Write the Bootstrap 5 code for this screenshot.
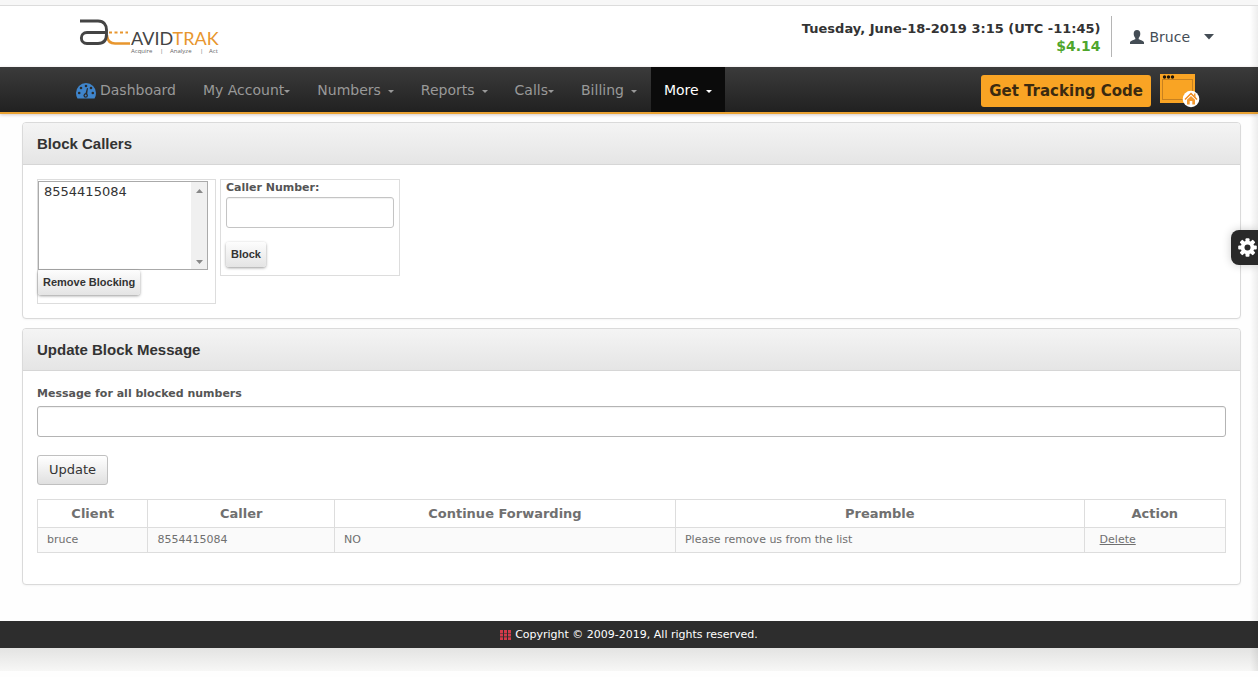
<!DOCTYPE html>
<html lang="en">
<head>
<meta charset="utf-8">
<meta name="viewport" content="width=device-width, initial-scale=1">
<title>AvidTrak - Block Callers</title>
<link href="https://cdn.jsdelivr.net/npm/bootstrap@5.3.0/dist/css/bootstrap.min.css" rel="stylesheet">
<style>
body{font-family:Verdana,"DejaVu Sans",sans-serif;font-size:13px;line-height:20px;color:#555;background:#fefefe;position:relative}
.edge-shade{position:absolute;top:6px;bottom:0;right:0;width:8px;background:linear-gradient(to right,rgba(0,0,0,0),rgba(0,0,0,.07));pointer-events:none}
.top-strip{height:6px;background:#f7f7f7;border-bottom:1px solid #dcdcdc}
.site-head{height:61px;padding:0 44px 0 76px;background:#fff}
.stamp{font-size:13px;line-height:17px;font-weight:700;color:#333;text-align:right;padding-right:11px;height:41px;border-right:1px solid #b5b5b5;padding-top:4px}
.stamp .balance{color:#4fa62c;font-size:14px;line-height:18px}
.head-right{padding-bottom:1px}
.user-link{color:#444d55;font-size:14px;padding:2px 0 0 18px}
.user-name{margin:0 14px 0 5px}
.main-nav{background:linear-gradient(#3b3b3b,#212121);border-bottom:2px solid #e9a233;padding:0 58px 0 63px;box-shadow:0 1px 3px rgba(80,40,40,.25)}
.main-nav .nav{gap:1px}
.main-nav .nav-link{padding:2px 13px 0;line-height:43px;font-size:14px;color:#999;white-space:nowrap}
.main-nav .nav-link.active{background:#0b0b0b;color:#fff}
.tick{display:inline-block;border:3px solid transparent;border-top-color:currentColor;border-bottom:0;vertical-align:middle}
.tick-gap{margin-left:7px}
.nav-side{padding-top:2px}
.btn-track{background:#f9a424;color:#3b2a10;font-size:15px;font-weight:700;line-height:20px;padding:6px 8px;border:0;border-radius:3px}
.btn-track:hover{background:#ffb445}
.page-body{padding:8px 17px 0 22px}
.panel-box{border:1px solid #dadada;border-radius:4px;background:#fff;box-shadow:0 1px 2px rgba(0,0,0,.04);margin-bottom:9px}
.panel-box>.card-header{background:linear-gradient(#f4f4f4,#e5e5e5);border-bottom:1px solid #d6d6d6;padding:0 14px;border-radius:3px 3px 0 0}
.panel-box h2{font-family:"Liberation Sans",Arial,sans-serif;font-size:15px;line-height:41px;font-weight:700;color:#333;margin:0}
.panel-box>.card-body{padding:14px}
.group-box{border:1px solid #ddd;width:179px;padding-bottom:9px}
.group-new{padding-left:5px;padding-right:5px;width:180px}
.blocked{border:1px solid #aaa;width:170px;height:89px;margin-top:1px}
.blocked select{border:0;outline:0;width:100%;padding:1px 1px 0;font-size:13px;line-height:20px;color:#333;background:#fff;overflow:hidden;font-family:inherit}
.blocked option{padding:1px 4px}
.rail{width:16px;flex:none;background:#f0f0f0;padding:7px 0 5px}
label{font-size:11px;line-height:15px;font-weight:700;color:#555}
.label-row{line-height:17px}
.form-control{height:31px;padding:4px 6px;font-size:13px;border:1px solid #c4c4c4;border-radius:3px;box-shadow:inset 0 1px 1px rgba(0,0,0,.06)}
.form-control.caller{margin:2px 0 14px}
.form-control.message{border-color:#b4b4b4}
.btn-raised{font-family:"Liberation Sans",Arial,sans-serif;font-size:11px;line-height:17px;font-weight:700;color:#333;padding:4px 5px;border:0;border-radius:3px;background:linear-gradient(#fdfdfd,#e4e4e4);box-shadow:0 1px 3px rgba(0,0,0,.4)}
.group-box{padding-bottom:8px}
.btn-update{font-size:13px;line-height:20px;padding:4px 11px;margin:18px 0 14px;color:#333;border:1px solid #c0c0c0;border-radius:3px;background:linear-gradient(#fff,#e0e0e0)}
.calls{margin-bottom:17px;border-color:#ddd;font-size:11px}
.calls th{font-size:13px;line-height:19px;padding:4px;text-align:center;color:#707070}
.calls td{line-height:18px;padding:3px 9px;color:#707070;background:#fafafa}
.calls td:last-child{padding-left:15px}
.calls a{color:#707070}
.site-foot{background:#2d2d2d;color:#fff;font-size:11px;line-height:27px;margin-top:36px}
.foot-shade{height:23px;background:linear-gradient(#e3e3e2,#f7f7f6)}
.gear{position:fixed;right:0;top:230px;width:27px;height:35px;border:0;border-radius:8px 0 0 8px;background:#292929;padding:0 1px 0 7px;box-shadow:0 0 10px rgba(0,0,0,.2)}
svg{display:block;flex:none}
</style>
</head>
<body>
<div class="top-strip"></div>
<header class="site-head d-flex align-items-center justify-content-between">
  <a href="#" aria-label="AvidTrak home">
    <svg width="150" height="42" viewBox="0 0 150 42">
      <g fill="none" stroke-width="2.600">
        <path stroke="#e8962e" d="M31 19V20Q32 27.500 39 27.500H54"/>
        <path stroke="#e8962e" stroke-dasharray="3 2.500" stroke-width="2.200" d="M33 16.500H52"/>
        <path stroke="#444" stroke-width="2.900" d="M4 5H22C28 5 30.500 9 30.500 14V18C30.500 24 28 27.500 22 27.500H11C3.500 27.500 3.500 16.500 11 16.500H30"/>
      </g>
      <text x="55" y="29" font-family="Lato" font-size="18" fill="#444">AVID<tspan fill="#e8962e">TRAK</tspan></text>
      <g font-family="Open Sans" font-size="6" fill="#666"><text x="55" y="37">Acquire</text><text x="84" y="37">|</text><text x="94" y="37">Analyze</text><text x="124" y="37">|</text><text x="133" y="37">Act</text></g>
    </svg>
  </a>
  <div class="head-right d-flex align-items-center">
    <div class="stamp"><div>Tuesday, June-18-2019 3:15 (UTC -11:45)</div><div class="balance">$4.14</div></div>
    <a href="#" class="user-link d-flex align-items-center text-decoration-none">
      <svg width="14" height="14" viewBox="0 0 14 14" fill="#444d55"><path d="M7 0C4.800 0 3.600 1.600 3.700 4 3.800 5.700 4.500 7.200 5.300 8V9.300C3 10.300 0 11 0 12.500V14H14V12.500C14 11 11 10.300 8.700 9.300V8C9.500 7.200 10.200 5.700 10.300 4 10.400 1.600 9.200 0 7 0Z"/></svg>
      <span class="user-name">Bruce</span>
      <svg width="10" height="6" viewBox="0 0 10 6" fill="#444d55"><path d="M0 0H10L5 5.500Z"/></svg>
    </a>
  </div>
</header>
<nav class="main-nav d-flex align-items-center justify-content-between">
  <ul class="nav flex-nowrap">
    <li class="nav-item"><a class="nav-link d-flex align-items-center gap-1" href="#">
      <svg width="20" height="16" viewBox="0 0 20 16"><path fill="#3f85cc" d="M10 0A10 10 0 0 0 0 10Q0 13 1.500 15.500H18.500Q20 13 20 10A10 10 0 0 0 10 0Z"/><g fill="#2c2c2c"><circle cx="3.200" cy="10" r="1.300"/><circle cx="5" cy="5" r="1.300"/><circle cx="10" cy="3" r="1.300"/><circle cx="15" cy="5" r="1.300"/><circle cx="16.800" cy="10" r="1.300"/><circle cx="9.700" cy="12.500" r="2.200"/><path d="M9 12 11 5 12 5.300 11 12Z"/></g><circle cx="9.700" cy="12.500" r="1" fill="#3f85cc"/></svg>Dashboard</a></li>
    <li class="nav-item"><a class="nav-link" href="#">My Account<span class="tick"></span></a></li>
    <li class="nav-item"><a class="nav-link" href="#">Numbers<span class="tick tick-gap"></span></a></li>
    <li class="nav-item"><a class="nav-link" href="#">Reports<span class="tick tick-gap"></span></a></li>
    <li class="nav-item"><a class="nav-link" href="#">Calls<span class="tick"></span></a></li>
    <li class="nav-item"><a class="nav-link" href="#">Billing<span class="tick tick-gap"></span></a></li>
    <li class="nav-item"><a class="nav-link active" aria-current="page" href="#">More<span class="tick tick-gap"></span></a></li>
  </ul>
  <div class="nav-side d-flex align-items-center gap-2">
    <button type="button" class="btn btn-track">Get Tracking Code</button>
    <a href="#" aria-label="Site home"><svg width="41" height="36" viewBox="0 0 41 36"><rect x="1" y="1" width="35" height="29" fill="#f9a424"/><g fill="#1d1408"><circle cx="5.500" cy="4" r="1.700"/><circle cx="9.500" cy="4" r="1.700"/><circle cx="13.500" cy="4" r="1.700"/></g><rect x="3.500" y="6.500" width="30" height="20" fill="none" stroke="#c78120"/><circle cx="32" cy="26" r="8.300" fill="#fff"/><path d="M26 26.500 32 20.500 38 26.500" fill="none" stroke="#f08a1c" stroke-width="1.500"/><path d="M28 26.800 32 23 36 26.800V31.500H33.300V28H30.700V31.500H28ZM35 20.500H36.500V24.500L35 23Z" fill="#f49a30"/></svg></a>
  </div>
</nav>
<main class="page-body">
  <section class="card panel-box">
    <div class="card-header"><h2>Block Callers</h2></div>
    <div class="card-body d-flex align-items-start gap-1">
      <form class="group-box">
        <div class="blocked d-flex">
          <select size="4" aria-label="Blocked numbers"><option>8554415084</option></select>
          <div class="rail d-flex flex-column align-items-center justify-content-between" aria-hidden="true">
            <svg width="7" height="4" viewBox="0 0 7 4"><path d="M0 4 3.500 0 7 4Z" fill="#888"/></svg>
            <svg width="7" height="4" viewBox="0 0 7 4"><path d="M0 0 3.500 4 7 0Z" fill="#888"/></svg>
          </div>
        </div>
        <button type="button" class="btn btn-raised">Remove Blocking</button>
      </form>
      <form class="group-box group-new">
        <label for="caller" class="d-block">Caller Number:</label>
        <input id="caller" type="text" class="form-control caller">
        <button type="button" class="btn btn-raised">Block</button>
      </form>
    </div>
  </section>
  <section class="card panel-box">
    <div class="card-header"><h2>Update Block Message</h2></div>
    <div class="card-body">
      <label for="message" class="label-row d-block mb-1">Message for all blocked numbers</label>
      <input id="message" type="text" class="form-control message">
      <button type="button" class="btn btn-update">Update</button>
      <table class="table table-bordered calls">
        <colgroup><col style="width:9.3%"><col style="width:15.7%"><col style="width:28.7%"><col style="width:34.4%"><col style="width:11.9%"></colgroup>
        <thead><tr><th>Client</th><th>Caller</th><th>Continue Forwarding</th><th>Preamble</th><th>Action</th></tr></thead>
        <tbody><tr><td>bruce</td><td>8554415084</td><td>NO</td><td>Please remove us from the list</td><td><a href="#">Delete</a></td></tr></tbody>
      </table>
    </div>
  </section>
</main>
<footer>
  <div class="site-foot d-flex align-items-center justify-content-center gap-1">
    <svg width="11" height="10" viewBox="0 0 11 10" fill="#d43a4a"><path d="M0 0h3v3H0zM4 0h3v3H4zM8 0h3v3H8zM0 3.600h3v3H0zM4 3.600h3v3H4zM8 3.600h3v3H8zM0 7.200h3v3H0zM4 7.200h3v3H4zM8 7.200h3v3H8z"/></svg>
    <span>Copyright © 2009-2019, All rights reserved.</span>
  </div>
  <div class="foot-shade"></div>
</footer>
<div class="edge-shade"></div>
<button type="button" class="gear" aria-label="Settings">
  <svg width="19" height="19" viewBox="-9.500 -9.500 19 19"><g fill="#fff"><circle r="6.800"/><g id="teeth"><rect x="-2" y="-9.300" width="4" height="18.600" rx="1"/><rect x="-9.300" y="-2" width="18.600" height="4" rx="1"/></g><use href="#teeth" transform="rotate(45)"/></g><circle r="3" fill="#292929"/></svg>
</button>
<script src="https://cdn.jsdelivr.net/npm/bootstrap@5.3.0/dist/js/bootstrap.bundle.min.js"></script>
</body>
</html>
